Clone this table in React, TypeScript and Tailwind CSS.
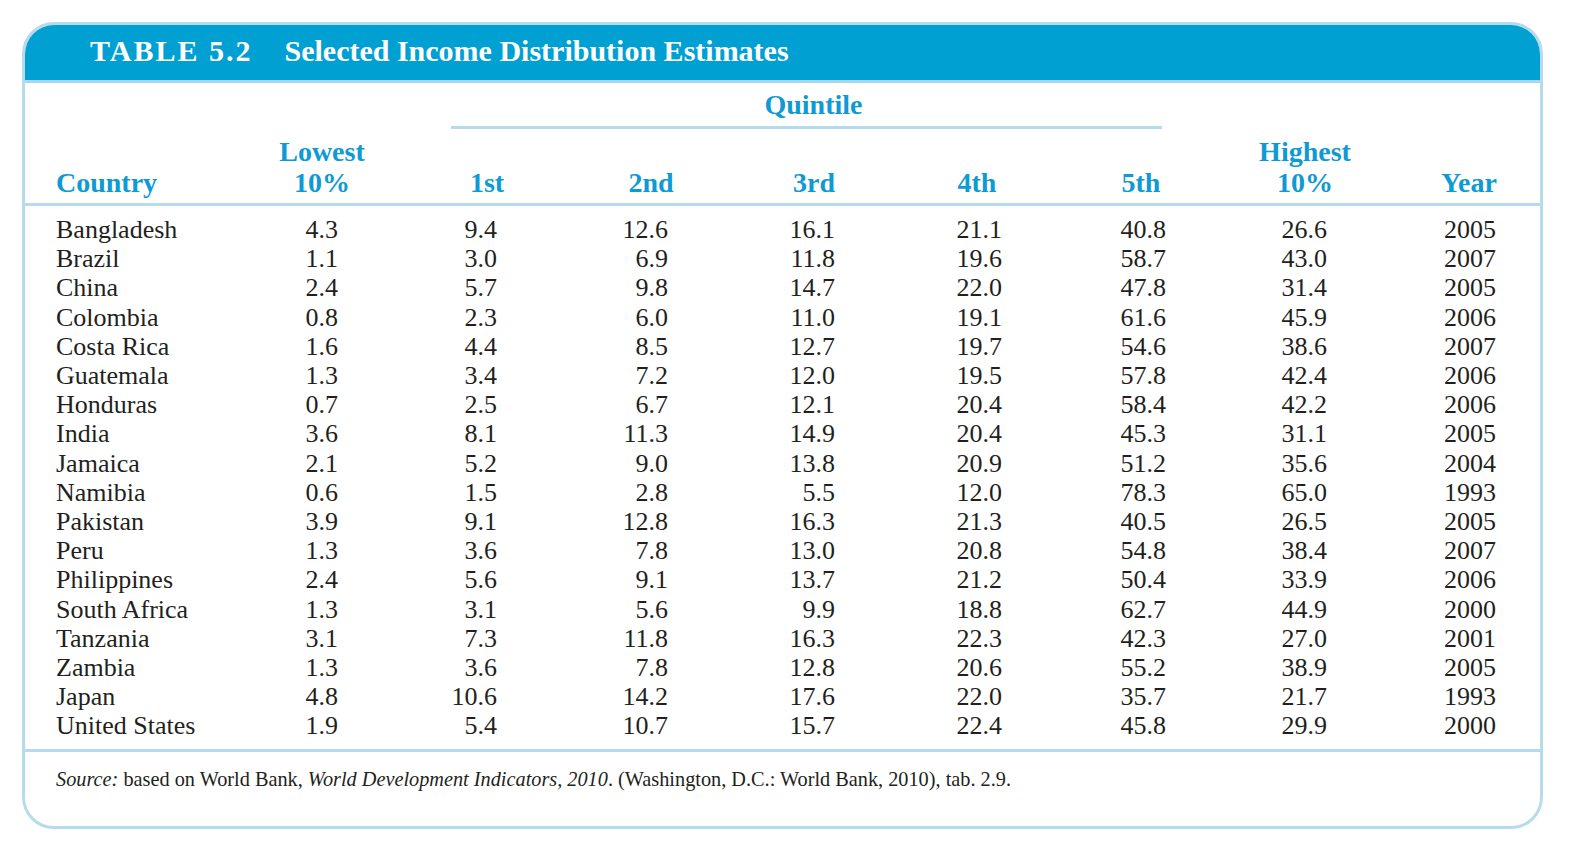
import React from "react";

const cols = [
  { key: "low", top: "Lowest", label: "10%", mr: "-mr-[44px]" },
  { key: "q1", top: "", label: "1st", mr: "-mr-[50px]" },
  { key: "q2", top: "", label: "2nd", mr: "-mr-[43px]" },
  { key: "q3", top: "", label: "3rd", mr: "-mr-[39px]" },
  { key: "q4", top: "", label: "4th", mr: "-mr-[35px]" },
  { key: "q5", top: "", label: "5th", mr: "-mr-[35px]" },
  { key: "high", top: "Highest", label: "10%", mr: "-mr-[38px]" },
  { key: "year", top: "", label: "Year", mr: "-mr-[33px]" },
];

const rows: [string, string, string, string, string, string, string, string, string][] = [
  ["Bangladesh", "4.3", "9.4", "12.6", "16.1", "21.1", "40.8", "26.6", "2005"],
  ["Brazil", "1.1", "3.0", "6.9", "11.8", "19.6", "58.7", "43.0", "2007"],
  ["China", "2.4", "5.7", "9.8", "14.7", "22.0", "47.8", "31.4", "2005"],
  ["Colombia", "0.8", "2.3", "6.0", "11.0", "19.1", "61.6", "45.9", "2006"],
  ["Costa Rica", "1.6", "4.4", "8.5", "12.7", "19.7", "54.6", "38.6", "2007"],
  ["Guatemala", "1.3", "3.4", "7.2", "12.0", "19.5", "57.8", "42.4", "2006"],
  ["Honduras", "0.7", "2.5", "6.7", "12.1", "20.4", "58.4", "42.2", "2006"],
  ["India", "3.6", "8.1", "11.3", "14.9", "20.4", "45.3", "31.1", "2005"],
  ["Jamaica", "2.1", "5.2", "9.0", "13.8", "20.9", "51.2", "35.6", "2004"],
  ["Namibia", "0.6", "1.5", "2.8", "5.5", "12.0", "78.3", "65.0", "1993"],
  ["Pakistan", "3.9", "9.1", "12.8", "16.3", "21.3", "40.5", "26.5", "2005"],
  ["Peru", "1.3", "3.6", "7.8", "13.0", "20.8", "54.8", "38.4", "2007"],
  ["Philippines", "2.4", "5.6", "9.1", "13.7", "21.2", "50.4", "33.9", "2006"],
  ["South Africa", "1.3", "3.1", "5.6", "9.9", "18.8", "62.7", "44.9", "2000"],
  ["Tanzania", "3.1", "7.3", "11.8", "16.3", "22.3", "42.3", "27.0", "2001"],
  ["Zambia", "1.3", "3.6", "7.8", "12.8", "20.6", "55.2", "38.9", "2005"],
  ["Japan", "4.8", "10.6", "14.2", "17.6", "22.0", "35.7", "21.7", "1993"],
  ["United States", "1.9", "5.4", "10.7", "15.7", "22.4", "45.8", "29.9", "2000"],
];

const grid = "grid grid-cols-[204px_78px_159px_171px_167px_167px_164px_161px_169px] pl-[31px]";

export default function App() {
  return (
    <div className="w-[1574px] h-[856px] bg-white pt-[22px] pl-[22px] font-['Liberation_Serif',serif]">
      <div className="w-[1521px] h-[807px] rounded-[32px] border-[3px] border-[#b6dcec] overflow-hidden flex flex-col">
        {/* title band */}
        <div className="h-[58px] bg-[#00a0d3] border-b-[3px] border-[#a9d6ea] flex items-center pb-[4px] pl-[65px] gap-[32px] text-white font-bold text-[30px] leading-none">
          <span className="tracking-[2px]">TABLE 5.2</span>
          <span>Selected Income Distribution Estimates</span>
        </div>

        {/* column headers */}
        <div className="border-b-[3px] border-[#b6dcec] text-[#0f9ad3] font-bold text-[28px]">
          <div className={grid + " pt-[7px]"}>
            <div className="col-span-2" />
            <div className="col-span-5 ml-[113px] mr-[4px] border-b-[3px] border-[#b6dcec] text-center leading-[30px] pb-[6px] pl-[14px]">
              Quintile
            </div>
            <div className="col-span-2" />
          </div>
          <div className={grid + " pt-[7px] pb-[5px] leading-[31px]"}>
            <div className="self-end">Country</div>
            {cols.map((c) => (
              <div key={c.key} className="flex justify-end">
                <div className={"w-[120px] text-center flex flex-col " + c.mr}>
                  <span className="h-[31px]">{c.top}</span>
                  <span>{c.label}</span>
                </div>
              </div>
            ))}
          </div>
        </div>

        {/* data rows */}
        <div className="border-b-[3px] border-[#b6dcec] pt-[9px] pb-[8px] text-[26px] leading-[29.2px] text-[#231f20]">
          {rows.map((r) => (
            <div key={r[0]} className={grid}>
              {r.map((v, i) => (
                <div key={i} className={i === 0 ? "text-left" : "text-right"}>
                  {v}
                </div>
              ))}
            </div>
          ))}
        </div>

        {/* source */}
        <div className="pl-[31px] pt-[15px] text-[20.3px] leading-[24px] text-[#231f20]">
          <i>Source:</i> based on World Bank, <i>World Development Indicators, 2010</i>. (Washington, D.C.: World Bank, 2010), tab. 2.9.
        </div>
      </div>
    </div>
  );
}
